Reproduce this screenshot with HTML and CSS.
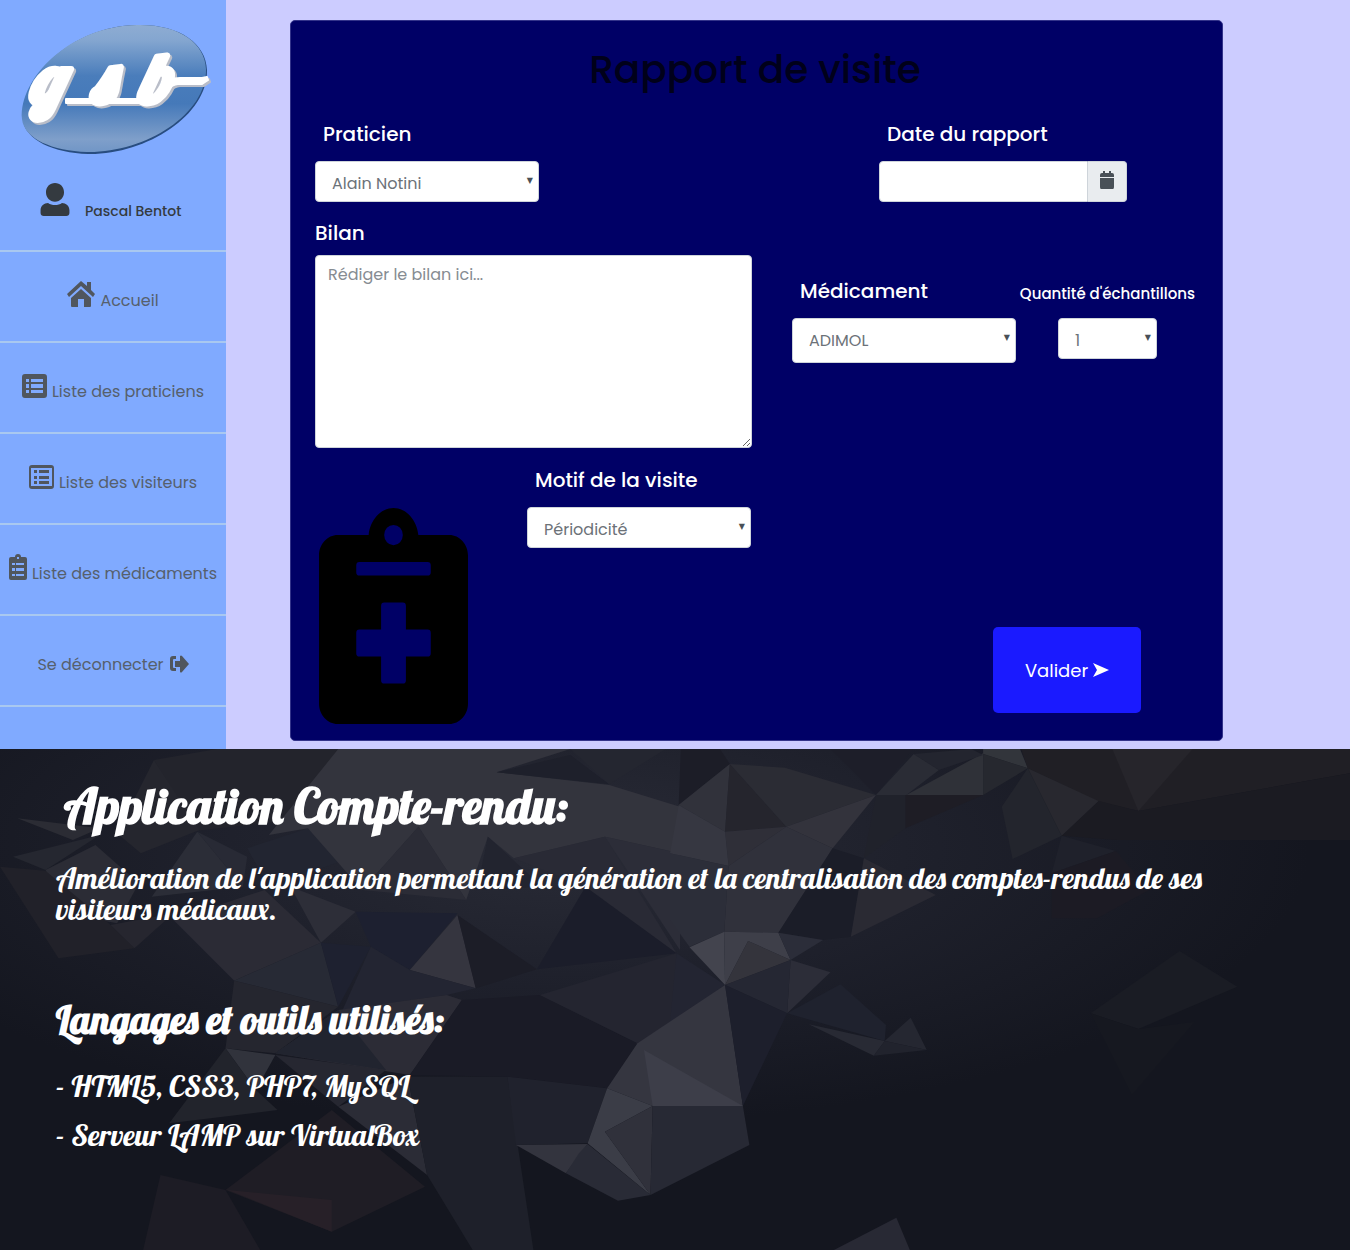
FILE: index.html
```html
<!DOCTYPE html>
<html lang="fr">
<head>
<meta charset="utf-8">
<meta name="viewport" content="width=device-width, initial-scale=1">
<title>Application Compte-rendu</title>
<link rel="stylesheet" href="styles.css">
</head>
<body>
<div class="app">
  <aside class="sidebar">
    <svg class="logo" viewBox="0 0 200 140" role="img" aria-label="gsb">
      <defs>
        <linearGradient id="oval" x1="0" y1="0" x2="0" y2="1">
          <stop offset="0" stop-color="#8eacd2"/>
          <stop offset=".12" stop-color="#84a6d0"/>
          <stop offset=".4" stop-color="#4a7dbb"/>
          <stop offset=".62" stop-color="#4579b9"/>
          <stop offset=".9" stop-color="#7f9fca"/>
          <stop offset="1" stop-color="#7196c6"/>
        </linearGradient>
      </defs>
      <path d="M11 103C8 62 58 9 125 8c42-1 69 18 70 45 1 46-62 85-119 84-34-1-63-14-65-34z" fill="#284d80"/>
      <path d="M10 102C7 61 58 9 125 8c42-1 68 18 69 44 1 46-62 84-119 83-34-1-63-13-65-33z" fill="url(#oval)"/>
      <g class="logo-shade"><text y="88"><tspan x="20">g</tspan><tspan x="82">s</tspan><tspan x="128">b</tspan></text><path d="M56 84h90v4H56zM152 71c6-6 10-8 18-8h22l5-1 1 3-6 4h-24c-6 0-9 4-13 8z"/></g>
      <g class="logo-face"><text y="86"><tspan x="18">g</tspan><tspan x="80">s</tspan><tspan x="126">b</tspan></text><path d="M54 82h90v4H54zM150 69c6-6 10-8 18-8h22l5-1 1 3-6 4h-24c-6 0-9 4-13 8z"/></g>
    </svg>
    <div class="user">
      <svg class="user-icon" viewBox="0 0 448 512" aria-hidden="true"><path d="M224 290c80 0 140-62 140-146S304 0 224 0 84 60 84 144s60 146 140 146zm108 20c-30 22-68 32-108 32s-78-10-108-32C55 310 0 355 0 422v42c0 26 22 48 48 48h352c26 0 48-22 48-48v-42c0-67-55-112-116-112z"/></svg>
      <span>Pascal Bentot</span>
    </div>
    <nav class="menu">
      <a href="#"><svg class="icon wide" viewBox="0 0 28 26" aria-hidden="true"><path d="M14 0 0 13l2 3L14 5l12 11 2-3-4-4V1h-4v4zM14 8 4 17v8q0 1 1 1h6v-8h6v8h6q1 0 1-1v-8z"/></svg>Accueil</a>
      <a href="#"><svg class="icon" viewBox="0 0 25 24" aria-hidden="true"><path fill-rule="evenodd" d="M3 0h19q3 0 3 3v18q0 3-3 3H3q-3 0-3-3V3q0-3 3-3zM4 5v3h3V5zm5 0v3h12V5zM4 10v4h3v-4zm5 0v4h12v-4zM4 16v3h3v-3zm5 0v3h12v-3z"/></svg>Liste des praticiens</a>
      <a href="#"><svg class="icon" viewBox="0 0 25 24" aria-hidden="true"><path fill-rule="evenodd" d="M3 0h19q3 0 3 3v18q0 3-3 3H3q-3 0-3-3V3q0-3 3-3zM2 3v18h21V3zM5 5h3v3H5zm5 0h10v3H10zM5 11h3v3H5zm5 0h10v3H10zM5 16h3v3H5zm5 0h10v3H10z"/></svg>Liste des visiteurs</a>
      <a href="#"><svg class="icon narrow" viewBox="0 0 18 26" aria-hidden="true"><path fill-rule="evenodd" d="M2 3h4q0-3 3-3t3 3h4q2 0 2 2v19q0 2-2 2H2q-2 0-2-2V5q0-2 2-2zM8 3v2h2V3zM3 9v2h3V9zm4 0v2h8V9zM3 14v3h3v-3zm4 0v3h8v-3zM3 20v2h3v-2zm4 0v2h8v-2z"/></svg>Liste des médicaments</a>
      <a class="logout" href="#">Se déconnecter<svg class="icon exit" viewBox="0 0 20 18" aria-hidden="true"><path d="M7 1H4Q1 1 1 4v9q0 3 3 3h3v-3H5q-1 0-1-1V5q0-1 1-1h2zM6 6h5V1q1-1 2 0l7 8-7 8q-1 1-2 0v-5H6z"/></svg></a>
    </nav>
  </aside>

  <main class="content">
    <form class="report">
      <h1>Rapport de visite</h1>
      <div class="row row-head">
        <div class="field medium">
          <label class="inset" for="praticien">Praticien</label>
          <div class="select"><select id="praticien"><option>Alain Notini</option></select></div>
        </div>
        <div class="field date">
          <label class="inset" for="date">Date du rapport</label>
          <div class="date-group">
            <input id="date" type="text">
            <button type="button" aria-label="Calendrier"><svg viewBox="0 0 14 18" aria-hidden="true"><path d="M3 0h2v2h4V0h2v2h1q2 0 2 2v2H0V4q0-2 2-2h1zM0 7h14v9q0 2-1 2H1q-1 0-1-2z"/></svg></button>
          </div>
        </div>
      </div>
      <div class="row">
        <div class="field bilan">
          <label for="bilan">Bilan</label>
          <textarea id="bilan" placeholder="Rédiger le bilan ici..."></textarea>
        </div>
        <div class="field medium lowered">
          <label class="inset" for="medicament">Médicament</label>
          <div class="select tall"><select id="medicament"><option>ADIMOL</option></select></div>
        </div>
        <div class="field quantity lowered">
          <label for="quantite">Quantité d'échantillons</label>
          <div class="select"><select id="quantite"><option>1</option></select></div>
        </div>
      </div>
      <div class="row row-foot">
        <svg class="notes" viewBox="0 0 384 512" preserveAspectRatio="none" aria-hidden="true"><path fill-rule="evenodd" d="M48 64h80c4-35 30-64 64-64s60 29 64 64h80c26 0 48 22 48 48v352c0 26-22 48-48 48H48c-26 0-48-22-48-48V112c0-26 22-48 48-48zm144-24a24 24 0 1 0 0 48 24 24 0 0 0 0-48zM104 128q-8 0-8 8v16q0 8 8 8h176q8 0 8-8v-16q0-8-8-8zm64 96q-8 0-8 8v56h-56q-8 0-8 8v48q0 8 8 8h56v56q0 8 8 8h48q8 0 8-8v-56h56q8 0 8-8v-48q0-8-8-8h-56v-56q0-8-8-8z"/></svg>
        <div class="field medium">
          <label class="inset" for="motif">Motif de la visite</label>
          <div class="select"><select id="motif"><option>Périodicité</option></select></div>
        </div>
        <button class="submit" type="submit">Valider<svg viewBox="0 0 16 14" aria-hidden="true"><path d="M0 0l16 7L0 14l4-7z"/></svg></button>
      </div>
    </form>
  </main>
</div>

<section class="about">
  <svg class="facets" viewBox="0 27 3113 1503" preserveAspectRatio="none" aria-hidden="true">
    <defs>
      <radialGradient id="night" cx=".42" cy=".2" r=".55">
        <stop offset="0" stop-color="#292b36"/>
        <stop offset=".5" stop-color="#1e202b"/>
        <stop offset="1" stop-color="#14161f"/>
      </radialGradient>
    </defs>
    <path fill="url(#night)" d="M0 27h3113v1503H0z"/>
    <g>
      <path fill="#23242c" d="M500 27h290l-15 200-320 45L355 60z"/>
      <path fill="#25262e" d="M355 60 460 270 325 340 270 280z"/>
      <path fill="#2b2c34" d="M40 235 230 265 168 300z"/>
      <path fill="#252730" d="M30 350 230 285 105 390z"/>
      <path fill="#2b2c35" d="M105 390 220 315 320 430 270 550 150 520z"/>
      <path fill="#212129" d="M0 380 105 392 255 555 310 625 135 655z"/>
      <path fill="#26262f" d="M255 555 400 520 310 625z"/>
      <path fill="#2b2d37" d="M455 275 350 470 560 440z"/>
      <path fill="#282a35" d="M455 275 570 350 560 440z"/>
      <path fill="#222531" d="M570 325 710 265 795 360 620 440z"/>
      <path fill="#33343d" d="M780 27h535L1145 97l260 38 163 65v140l-173-50-210 65-60-65-50 190L965 260 835 450 710 265 620 285z"/>
      <path fill="#2b2c36" d="M965 260 1075 480 835 450z"/>
      <path fill="#1e202b" d="M1145 97 1315 45 1405 133z"/>
      <path fill="#242630" d="M1315 27h220L1405 133z"/>
      <path fill="#22242f" d="M1125 290 1250 440 1100 450z"/>
      <path fill="#292a35" d="M1185 355 1395 290 1560 640 1350 440z"/>
      <path fill="#2c2d38" d="M1395 290 1568 340V630z"/>
      <path fill="#1b1d2a" d="M1350 440 1560 640 1238 688z"/>
      <path fill="#2d2e38" d="M670 440 820 515 740 608z"/>
      <path fill="#2b2b35" d="M400 540 610 450 740 608 540 722z"/>
      <path fill="#1d2030" d="M820 515 1055 520 945 690 855 620z"/>
      <path fill="#35353f" d="M1055 525 1097 745 945 690z"/>
      <path fill="#1c1d27" d="M1055 525 1238 688 1097 745z"/>
      <path fill="#272a35" d="M740 608 780 800 540 722z"/>
      <path fill="#1e2130" d="M740 608 855 620 780 800z"/>
      <path fill="#232532" d="M855 620 945 690 1097 745 1030 765 790 810z"/>
      <path fill="#25262f" d="M540 722 780 800 635 940 520 925z"/>
      <path fill="#2c2c36" d="M780 810 1030 765 1065 780 945 1005 635 940z"/>
      <path fill="#21242f" d="M780 810 890 990 635 940z"/>
      <path fill="#31333c" d="M520 925 635 945 590 1050z"/>
      <path fill="#22242c" d="M520 925 590 1050 640 1110 390 1150z"/>
      <path fill="#262731" d="M635 945 890 990 780 1100z"/>
      <path fill="#2b2c36" d="M780 1100 940 1010 985 1305z"/>
      <path fill="#1e202a" d="M940 1010 1170 1010 1230 1530 1090 1530 985 1305z"/>
      <path fill="#1a1b26" d="M1065 780 1245 765 1470 910 1400 1045 1170 1010 945 1005z"/>
      <path fill="#242530" d="M1245 765 1560 640 1568 830 1470 910z"/>
      <path fill="#232532" d="M1560 640 1672 735 1545 850z"/>
      <path fill="#20222d" d="M1170 1010 1400 1045 1355 1210 1190 1215z"/>
      <path fill="#353640" d="M1470 910 1672 735 1713 1098H1505L1400 1045z"/>
      <path fill="#3b3d47" d="M1400 1045 1505 1098 1395 1175 1500 1365 1355 1210z"/>
      <path fill="#30313b" d="M1505 1098 1500 1365 1395 1175z"/>
      <path fill="#33343e" d="M1190 1215 1355 1212 1305 1300z"/>
      <path fill="#292b36" d="M1335 1240 1355 1212 1500 1365 1425 1382 1305 1300z"/>
      <path fill="#272934" d="M1505 1098H1713L1728 1215 1500 1365z"/>
      <path fill="#1f1d25" d="M765 1110 520 1350 765 1475 980 1340z"/>
      <path fill="#272028" d="M525 1350 765 1380 765 1475z"/>
      <path fill="#1d1c25" d="M370 1305 520 1350 600 1530 330 1530z"/>
    </g>
    <g transform="translate(1545)">
      <path fill="#1c1d27" d="M25 27h90l23 45L20 195z"/>
      <path fill="#1d1e29" d="M370 27h190L475 165z"/>
      <path fill="#31323b" d="M20 195 138 72 127 275z"/>
      <path fill="#25252d" d="M138 72 268 260 127 275z"/>
      <path fill="#2b2c34" d="M138 72 265 83 475 165 268 260z"/>
      <path fill="#33333c" d="M268 260 475 165 375 325z"/>
      <path fill="#2f2f38" d="M127 275 268 260 135 378z"/>
      <path fill="#363741" d="M20 195 127 275 135 378 0 340z"/>
      <path fill="#30313b" d="M135 378 268 260 375 325 250 578 125 575z"/>
      <path fill="#2c2e39" d="M0 340 135 378 125 575 45 620 0 540z"/>
      <path fill="#1b1d28" d="M375 325 447 355 417 590 353 600 250 578z"/>
      <path fill="#43444e" d="M125 575 45 622 127 735z"/>
      <path fill="#3e3f49" d="M125 575 250 578 278 660 180 603 127 735z"/>
      <path fill="#34343c" d="M180 603 278 660 127 735z"/>
      <path fill="#2b2d39" d="M250 578 353 600 278 660z"/>
      <path fill="#2c2d38" d="M278 660 370 697 270 820z"/>
      <path fill="#252733" d="M127 735 278 660 270 820z"/>
      <path fill="#1d1f2c" d="M127 735 270 820 168 1098z"/>
      <path fill="#3d3e49" d="M-60 930 168 1098H-40z"/>
      <path fill="#1f222e" d="M270 820 393 733 498 855 495 903z"/>
      <path fill="#282a34" d="M320 853 495 903 470 947z"/>
      <path fill="#252731" d="M555 833 592 930 495 903z"/>
      <path fill="#21232d" d="M495 903 592 930 470 947z"/>
      <path fill="#2a2a33" d="M447 355 613 465 417 590z"/>
      <path fill="#20222b" d="M475 165H543V265L447 355z"/>
      <path fill="#1e1d25" d="M543 165H722L543 265z"/>
      <path fill="#2a2c35" d="M475 165 562 42 620 90 545 165z"/>
      <path fill="#2f3138" d="M545 165 722 40V165z"/>
      <path fill="#23252f" d="M562 42 695 27 722 45 620 90z"/>
      <path fill="#32353b" d="M722 27h85l18 58-103-43z"/>
      <path fill="#26282f" d="M722 42 825 85 722 165z"/>
      <path fill="#201f25" d="M810 27H1568V100L1080 213 985 183 825 85z"/>
      <path fill="#26252b" d="M1020 27h185L1080 213z"/>
      <path fill="#1b1b22" d="M988 183 1080 213 1568 100V300H1030L903 287z"/>
      <path fill="#28282f" d="M825 85 988 183 903 287z"/>
      <path fill="#23252d" d="M825 85 765 200 790 357 903 287z"/>
      <path fill="#1f212b" d="M903 287 1028 333 880 400z"/>
      <path fill="#1c1b24" d="M1028 333 1105 450 985 535 880 535 880 400z"/>
      <path fill="#1a1c24" d="M970 820 1175 633 1308 740 1080 867z"/>
      <path fill="#161820" d="M970 820 1080 867 1210 845 1065 1065z"/>
      <path fill="#282934" d="M378 1530 522 1433 553 1530z"/>
    </g>
  </svg>
  <div class="about-text">
    <h2>Application Compte-rendu:</h2>
    <p>Amélioration de l'application permettant la génération et la centralisation des comptes-rendus de ses visiteurs médicaux.</p>
    <h3>Langages et outils utilisés:</h3>
    <p>- HTML5, CSS3, PHP7, MySQL</p>
    <p>- Serveur LAMP sur VirtualBox</p>
  </div>
</section>
</body>
</html>
```

FILE: styles.css
```css
* {
  box-sizing: border-box;
}

body {
  margin: 0;
  min-height: 100vh;
  display: flex;
  flex-direction: column;
  background: #14161f;
  font-family: Poppins, Inter, "Open Sans", sans-serif;
  font-size: 16px;
  color: #495057;
}

h1, h2, h3, p {
  margin: 0;
}

input, select, textarea, button {
  font: inherit;
  color: inherit;
}

/* Application */
.app {
  display: flex;
  background: #ccccff;
}

.sidebar {
  flex: 0 0 226px;
  background: #80aaff;
}

.logo {
  display: block;
  width: 200px;
  height: 140px;
  margin: 17px 0 0 12px;
  overflow: visible;
}

.logo text {
  font-family: Lobster, "Liberation Serif", serif;
  font-size: 68px;
  font-style: italic;
}

.logo-shade {
  fill: #b9bdc8;
  stroke: #b9bdc8;
  stroke-width: 6;
  stroke-linejoin: round;
}

.logo-face {
  fill: #ffffff;
  stroke: #ffffff;
  stroke-width: 6;
  stroke-linejoin: round;
}

.logo path {
  stroke-width: 2;
}

.user {
  display: flex;
  align-items: flex-end;
  gap: 15px;
  height: 93px;
  padding: 0 0 32px 40px;
  font-size: 14px;
  font-weight: 500;
  line-height: 14px;
  color: #343a40;
}

.user-icon {
  width: 30px;
  height: 33px;
  margin-bottom: 2px;
  fill: #343a40;
}

.menu {
  border-top: 2px solid #a9c8f0;
}

.menu a {
  display: flex;
  align-items: flex-end;
  justify-content: center;
  gap: 5px;
  height: 91px;
  padding-bottom: 30px;
  border-bottom: 2px solid #a9c8f0;
  line-height: 20px;
  white-space: nowrap;
  text-decoration: none;
  color: #56606c;
}

.icon {
  width: 25px;
  height: 24px;
  margin-bottom: 4px;
  fill: #50565e;
}

.icon.wide {
  width: 28px;
  height: 26px;
}

.icon.narrow {
  width: 18px;
  height: 26px;
}

.icon.exit {
  width: 20px;
  height: 18px;
  margin-bottom: 2px;
}

.content {
  flex: 1;
  min-width: 0;
  padding: 20px 127px 8px 64px;
}

.report {
  padding: 24px 27px 16px 24px;
  border: 1px solid #33338a;
  border-radius: 5px;
  background: #000066;
}

.report h1 {
  margin-bottom: 24px;
  font-size: 39px;
  font-weight: 500;
  line-height: 50px;
  text-align: center;
  color: #00001a;
}

.row {
  display: flex;
  justify-content: space-between;
}

.row-head {
  padding-right: 68px;
  margin-bottom: 16px;
}

.field {
  display: flex;
  flex-direction: column;
  gap: 12px;
}

.field label {
  font-size: 20px;
  font-weight: 500;
  line-height: 30px;
  color: #ffffff;
}

.field .inset {
  padding-left: 8px;
}

.medium {
  width: 224px;
}

.date {
  width: 248px;
}

.bilan {
  width: 437px;
  gap: 7px;
}

.bilan + .medium {
  margin: 0 auto 0 40px;
}

.lowered {
  padding-top: 58px;
}

.quantity {
  align-items: center;
}

.field.quantity label {
  padding-top: 6px;
  font-size: 15px;
  line-height: 24px;
}

.quantity .select {
  width: 99px;
}

.select {
  position: relative;
}

.select::after {
  content: "▼";
  position: absolute;
  top: 14px;
  right: 6px;
  font-family: "DejaVu Sans", sans-serif;
  font-size: 8px;
  line-height: 12px;
  pointer-events: none;
}

.select select {
  appearance: none;
  display: block;
  width: 100%;
  height: 41px;
  padding: 3px 16px 0;
  border: 1px solid #ced4da;
  border-radius: 4px;
  background: #ffffff;
  color: #6c7278;
}

.select.tall select {
  height: 45px;
  padding-top: 0;
}

.date-group {
  display: flex;
  height: 41px;
}

.date-group input {
  flex: 1;
  min-width: 0;
  padding: 0 12px;
  border: 1px solid #ced4da;
  border-radius: 4px 0 0 4px;
  background: #ffffff;
}

.date-group button {
  display: flex;
  align-items: center;
  justify-content: center;
  width: 39px;
  padding: 0 0 3px;
  border: 1px solid #ced4da;
  border-left: 0;
  border-radius: 0 4px 4px 0;
  background: #e9ecef;
}

.date-group svg {
  width: 14px;
  height: 18px;
  fill: #495057;
}

textarea {
  display: block;
  width: 100%;
  height: 193px;
  padding: 7px 12px;
  border: 1px solid #ced4da;
  border-radius: 4px;
  background: #ffffff;
  line-height: 24px;
}

textarea::placeholder {
  color: #868c92;
}

.row-foot {
  justify-content: flex-start;
  margin-top: 17px;
}

.notes {
  width: 149px;
  height: 216px;
  margin: 43px 59px 0 4px;
  fill: #000000;
}

.submit {
  display: flex;
  align-items: center;
  justify-content: center;
  gap: 5px;
  align-self: flex-end;
  width: 148px;
  height: 86px;
  margin: 0 54px 11px auto;
  border: 0;
  border-radius: 5px;
  background: #1a1aff;
  font-size: 18px;
  color: #ffffff;
}

.submit svg {
  width: 16px;
  height: 14px;
  fill: #ffffff;
}

/* Presentation */
.about {
  position: relative;
  flex: 1;
  font-family: Lobster, "Liberation Serif", serif;
  color: #ffffff;
}

.facets {
  position: absolute;
  inset: 0;
  width: 100%;
  height: 100%;
}

.about-text {
  position: relative;
  padding: 32px 56px;
}

.about-text h2 {
  margin-bottom: 32px;
  padding-left: 8px;
  font-size: 49px;
  line-height: 50px;
}

.about-text p {
  margin-bottom: 18px;
  font-size: 30px;
  line-height: 31px;
}

.about-text h3 {
  margin: 74px 0 30px;
  font-size: 39px;
  line-height: 42px;
}
```
